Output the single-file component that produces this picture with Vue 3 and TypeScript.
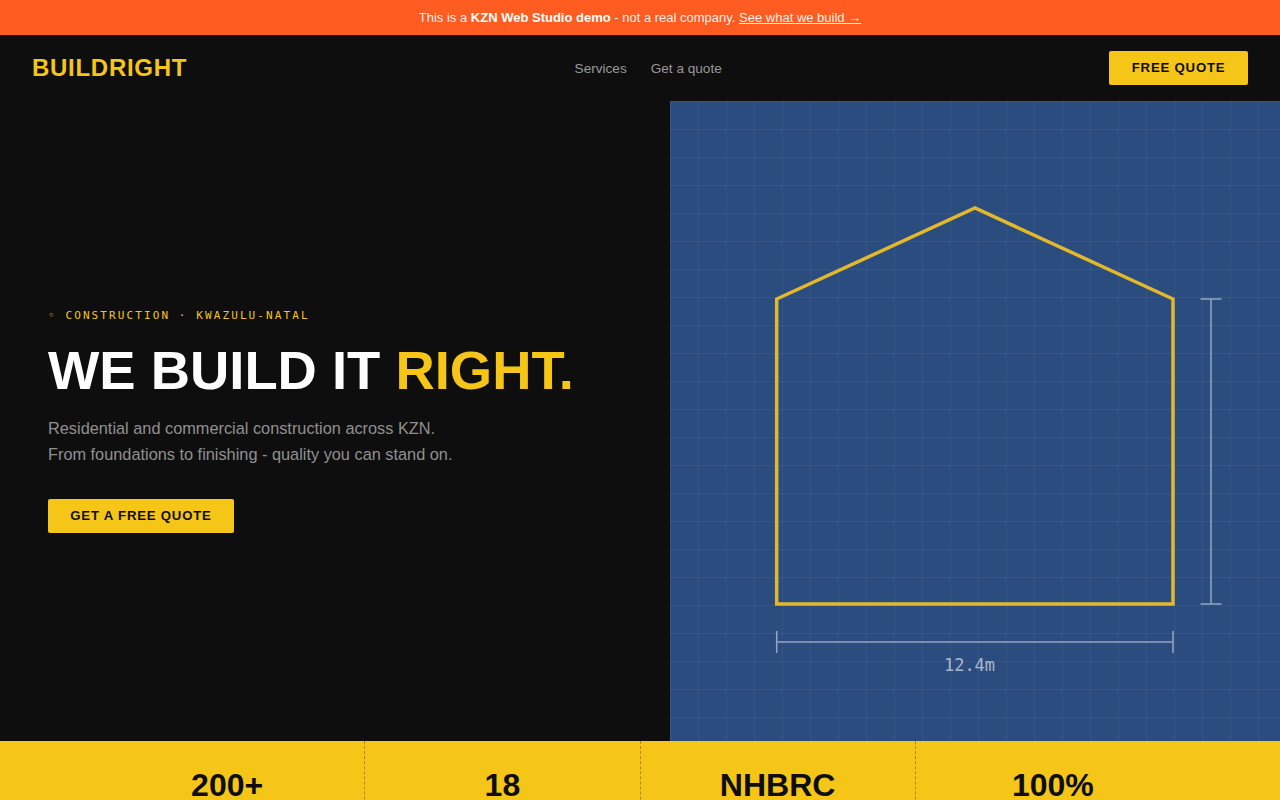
<template>
  <div class="page">
    <div class="banner">
      This is a <strong>KZN Web Studio demo</strong> - not a real company.
      <a href="#">See what we build →</a>
    </div>

    <nav class="nav">
      <a href="#" class="logo">BUILDRIGHT</a>
      <div class="nav-links">
        <a v-for="link in links" :key="link" href="#">{{ link }}</a>
      </div>
      <a href="#" class="btn btn-nav">FREE QUOTE</a>
    </nav>

    <section class="hero">
      <div class="hero-text">
        <p class="eyebrow">◦ CONSTRUCTION · KWAZULU-NATAL</p>
        <h1>WE BUILD IT <span>RIGHT.</span></h1>
        <p class="lead">
          Residential and commercial construction across KZN.<br />
          From foundations to finishing - quality you can stand on.
        </p>
        <a href="#" class="btn">GET A FREE QUOTE</a>
      </div>

      <div class="blueprint">
        <svg viewBox="0 0 610 640" width="610" height="640" fill="none">
          <polygon class="house" points="106.7,198 305,107 503,198 503,503 106.7,503" />
          <g class="dim">
            <path d="M106.7 541H503M106.7 530V552M503 530V552" />
            <path d="M541 198V503M530.5 198H551.5M530.5 503H551.5" />
          </g>
          <text x="299.5" y="570" text-anchor="middle">12.4m</text>
        </svg>
      </div>
    </section>

    <section class="stats">
      <div class="stats-row">
        <div v-for="stat in stats" :key="stat" class="stat">{{ stat }}</div>
      </div>
    </section>
  </div>
</template>

<script setup lang="ts">
const links: string[] = ['Services', 'Get a quote']
const stats: string[] = ['200+', '18', 'NHBRC', '100%']
</script>

<style>
html,
body {
  margin: 0;
  background: #0e0e0e;
}
</style>

<style scoped>
.page {
  font-family: 'Liberation Sans', Arial, sans-serif;
  color: #fff;
  background: #0e0e0e;
}

.banner {
  height: 35px;
  box-sizing: border-box;
  padding-top: 10px;
  text-align: center;
  font-size: 13px;
  line-height: 15px;
  background: #ff5c22;
  color: rgba(255, 255, 255, 0.92);
}

.banner strong {
  color: #fff;
}

.banner a {
  color: inherit;
}

.nav {
  height: 66px;
  box-sizing: border-box;
  padding: 0 32px;
  display: flex;
  align-items: center;
  justify-content: space-between;
}

.logo {
  font-size: 24px;
  font-weight: 700;
  letter-spacing: 0.03em;
  color: #f5c518;
  text-decoration: none;
}

.nav-links {
  display: flex;
  gap: 24px;
}

.nav-links a {
  font-size: 13.6px;
  color: #999;
  text-decoration: none;
}

.btn {
  display: inline-block;
  padding: 10px 22.3px;
  font-size: 13.2px;
  line-height: 14px;
  font-weight: 700;
  letter-spacing: 0.06em;
  color: #0e0e0e;
  background: #f5c518;
  border-radius: 2px;
  text-decoration: none;
}

.btn-nav {
  padding: 10px 22.6px;
}

.hero {
  height: 640px;
  display: grid;
  grid-template-columns: 1.1fr 1fr;
}

.hero-text {
  padding: 0 48px;
  display: flex;
  flex-direction: column;
  justify-content: center;
  align-items: flex-start;
}

.eyebrow {
  margin: 0 0 18px;
  font-family: 'DejaVu Sans Mono', monospace;
  font-size: 11px;
  line-height: 14px;
  letter-spacing: 2.1px;
  color: #f5c518;
}

h1 {
  margin: 0 0 14px;
  font-size: 54.4px;
  line-height: 60px;
  font-weight: 700;
}

h1 span {
  color: #f5c518;
}

.lead {
  margin: 0 0 32px;
  font-size: 16.32px;
  line-height: 26px;
  color: #909090;
}

.blueprint {
  background-color: #2b4c7e;
  background-image:
    linear-gradient(rgba(255, 255, 255, 0.05) 1px, transparent 1px),
    linear-gradient(90deg, rgba(255, 255, 255, 0.05) 1px, transparent 1px);
  background-size: 28px 28px;
  overflow: hidden;
}

.blueprint svg {
  display: block;
}

.house {
  stroke: #e3b92b;
  stroke-width: 3.5;
}

.dim {
  stroke: rgba(255, 255, 255, 0.5);
  stroke-width: 1.5;
}

.blueprint text {
  font-family: 'DejaVu Sans Mono', monospace;
  font-size: 17px;
  fill: rgba(255, 255, 255, 0.6);
}

.stats {
  background: #f5c518;
}

.stats-row {
  max-width: 1100px;
  margin: 0 auto;
  display: flex;
}

.stat {
  flex: 1;
  padding: 24px 24px 40px;
  text-align: center;
  font-size: 32px;
  line-height: 40px;
  font-weight: 700;
  color: #0e0e0e;
  border-right: 1px dashed rgba(0, 0, 0, 0.3);
}

.stat:last-child {
  border-right: none;
}
</style>
